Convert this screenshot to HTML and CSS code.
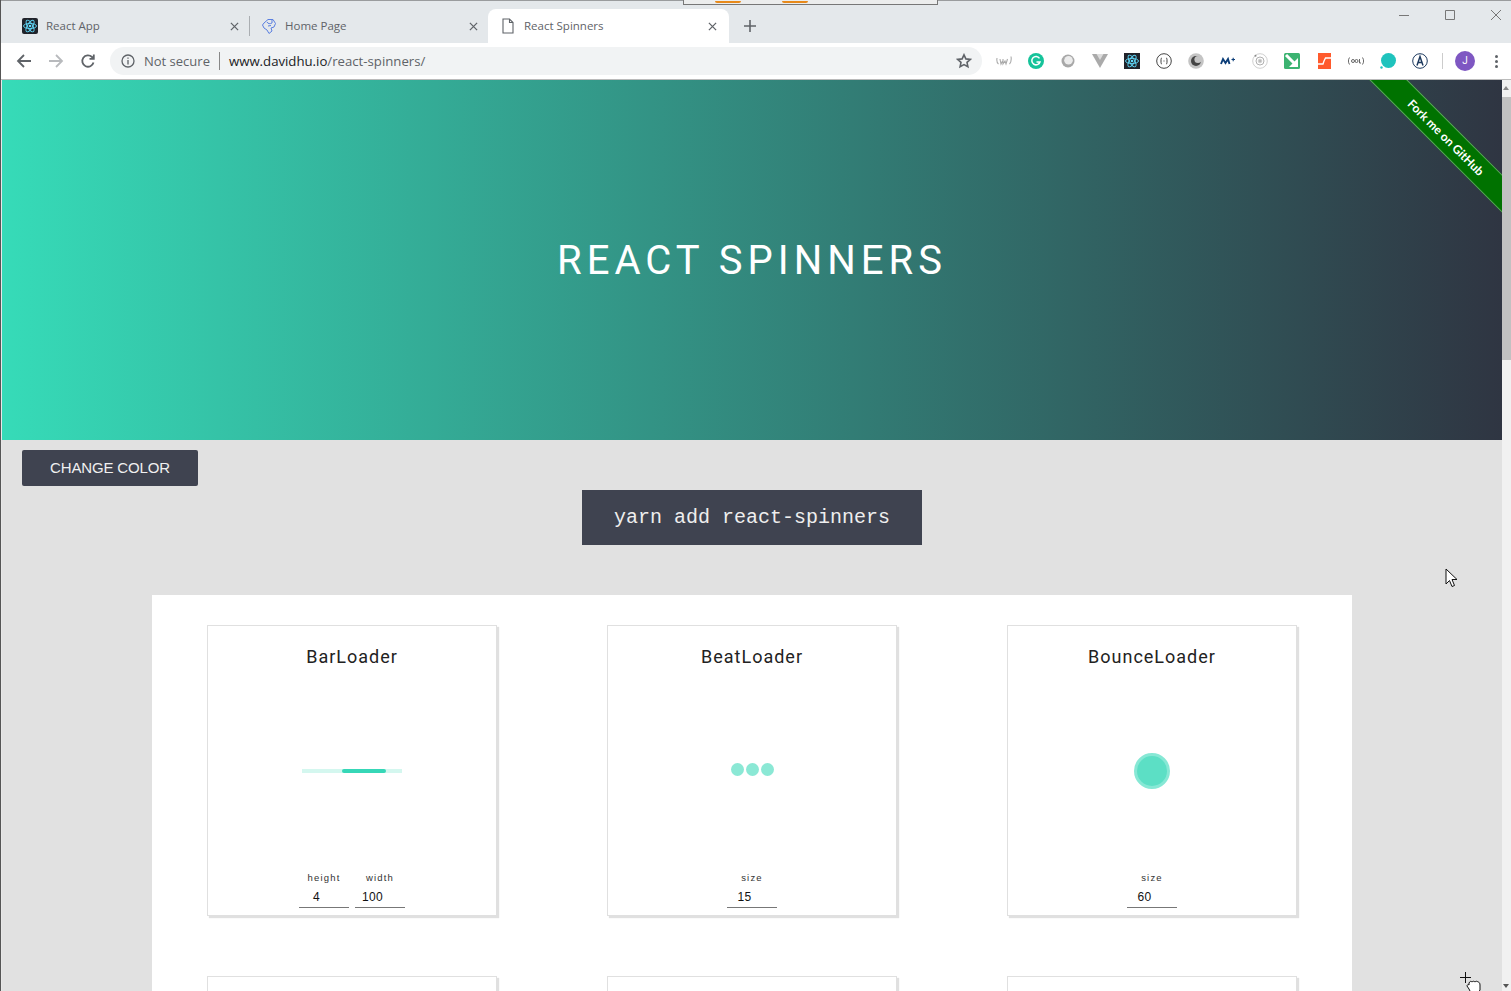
FILE: index.html
```html
<!DOCTYPE html>
<html lang="en">
<head>
    <meta charset="UTF-8">
    <meta name="viewport" content="width=device-width, initial-scale=1.0">
    <title>React Spinners</title>
    <link rel="stylesheet" href="styles.css">
</head>
<body>
<div class="browser">
    <div class="sliver"><span class="sliver-dot"></span><span class="sliver-dot"></span></div>

    <div class="tabstrip">
        <div class="tab">
            <svg class="tab-icon" viewBox="0 0 16 16"><rect width="16" height="16" rx="2" fill="#20232a"/><g fill="none" stroke="#61dafb" stroke-width=".9"><ellipse cx="8" cy="8" rx="6.5" ry="2.6"/><ellipse cx="8" cy="8" rx="6.5" ry="2.6" transform="rotate(60 8 8)"/><ellipse cx="8" cy="8" rx="6.5" ry="2.6" transform="rotate(120 8 8)"/></g><circle cx="8" cy="8" r="1.3" fill="#61dafb"/></svg>
            <span class="tab-title">React App</span>
            <svg class="tab-close" viewBox="0 0 10 10"><path d="M1 1l8 8M9 1l-8 8"/></svg>
        </div>
        <div class="tab-sep"></div>
        <div class="tab tab-home">
            <svg class="tab-icon" viewBox="0 0 16 16" fill="none" stroke="#5a7fe0" stroke-width="1"><path d="M3 5L7 1.500h5L14.500 5.500 13 9l-3 1 1 3-3 2.500L6 12l-3-2-1.500-3z"/><path d="M6 4c1 2 3 2 5 1M7 8l3-.5M11 2v3"/></svg>
            <span class="tab-title">Home Page</span>
            <svg class="tab-close" viewBox="0 0 10 10"><path d="M1 1l8 8M9 1l-8 8"/></svg>
        </div>
        <div class="tab tab-active">
            <svg class="tab-icon" viewBox="0 0 16 16" fill="none" stroke="#5f6368" stroke-width="1.1"><path d="M3 1h6.500L13 4.500V15H3zM9.500 1v3.500H13"/></svg>
            <span class="tab-title">React Spinners</span>
            <svg class="tab-close" viewBox="0 0 10 10"><path d="M1 1l8 8M9 1l-8 8"/></svg>
        </div>
        <svg class="new-tab" viewBox="0 0 12 12"><path d="M6 0v12M0 6h12"/></svg>
        <div class="window-btns">
            <svg viewBox="0 0 12 12"><path d="M1 6.500h10"/></svg>
            <svg viewBox="0 0 12 12"><path d="M1.500 1.500h9v9h-9z"/></svg>
            <svg viewBox="0 0 12 12"><path d="M1 1l10 10M11 1L1 11"/></svg>
        </div>
    </div>

    <div class="toolbar">
        <svg class="nav-btn" viewBox="0 0 16 16"><path d="M15 8H2M8 2L2 8l6 6"/></svg>
        <svg class="nav-btn nav-off" viewBox="0 0 16 16"><path d="M1 8h13M8 2l6 6-6 6"/></svg>
        <svg class="nav-btn" viewBox="0 0 16 16"><path d="M13.500 9.500A5.700 5.700 0 1 1 12 4l1.500 1.500M13.800 1.500v4.300H9.500"/></svg>
        <div class="omnibox">
            <svg class="info-icon" viewBox="0 0 14 14"><circle cx="7" cy="7" r="6"/><path d="M7 6v4.500M7 3.500v1.300"/></svg>
            <span class="not-secure">Not secure</span>
            <span class="omni-sep"></span>
            <span class="url">www.davidhu.io<span class="url-path">/react-spinners/</span></span>
            <svg class="star" viewBox="0 0 16 16"><path d="M8 1.800l1.900 4.100 4.400.5-3.300 3 .9 4.400L8 11.600l-3.900 2.200.9-4.400-3.300-3 4.400-.5z"/></svg>
        </div>
        <div class="extensions">
            <svg class="ext" viewBox="0 0 16 16" fill="none" stroke="#aaa" stroke-width="1.100"><path d="M1 5c-.5 3 0 5 1.500 6M15 3.500c.5 3 0 6-1.500 7.500M4 6l1 5 1.500-3M7 6v5l2-3 1 3 1.500-5"/></svg>
            <svg class="ext" viewBox="0 0 16 16"><circle cx="8" cy="8" r="8" fill="#15c39a"/><path d="M11.500 5.300A4.200 4.200 0 1 0 12 9H8.500" fill="none" stroke="#fff" stroke-width="1.500"/></svg>
            <svg class="ext" viewBox="0 0 16 16"><circle cx="8" cy="8" r="6.500" fill="#a8a8a8"/><circle cx="8.500" cy="7.300" r="4.300" fill="#ececec"/></svg>
            <svg class="ext" viewBox="0 0 16 16"><path d="M0 1h16L8 15z" fill="#aaa"/><path d="M4.500 1h7L8 7z" fill="#ddd"/></svg>
            <svg class="ext" viewBox="0 0 16 16"><rect width="16" height="16" fill="#20232a"/><g fill="none" stroke="#61dafb" stroke-width=".9"><ellipse cx="8" cy="8" rx="6.500" ry="2.600"/><ellipse cx="8" cy="8" rx="6.500" ry="2.600" transform="rotate(60 8 8)"/><ellipse cx="8" cy="8" rx="6.500" ry="2.600" transform="rotate(120 8 8)"/></g><circle cx="8" cy="8" r="1.300" fill="#61dafb"/></svg>
            <svg class="ext" viewBox="0 0 16 16" fill="none" stroke="#444" stroke-width="1"><circle cx="8" cy="8" r="7.300"/><path d="M6 5c-1 0-1 1-1 3s0 3 1 3M10 5c1 0 1 1 1 3s0 3-1 3M7.500 8h1"/></svg>
            <svg class="ext" viewBox="0 0 16 16"><circle cx="8" cy="8" r="7.800" fill="#c4c4c4"/><circle cx="8" cy="8" r="5" fill="#444"/><circle cx="10" cy="6.500" r="3.600" fill="#c4c4c4"/></svg>
            <svg class="ext" viewBox="0 0 16 16" fill="none" stroke="#0b3d78"><path d="M1 11L3 6l2.500 4L8 6l1.500 5" stroke-width="1.900"/><path d="M11.500 6.500h3.500M13.200 4.800v3.400" stroke-width="1.100"/></svg>
            <svg class="ext" viewBox="0 0 16 16" fill="none" stroke="#d0d0d0" stroke-width="1"><circle cx="8" cy="8" r="7.300"/><circle cx="8" cy="8" r="4" stroke="#b0b0b0"/><circle cx="8" cy="8" r="1.800" fill="#bbb"/><circle cx="3.500" cy="2.800" r="1" fill="#888" stroke="none"/></svg>
            <svg class="ext" viewBox="0 0 16 16"><rect width="16" height="16" rx="1.500" fill="#3cb371"/><path d="M2 2l9 9" fill="none" stroke="#fff" stroke-width="3"/><path d="M14 5v9H5z" fill="#fff"/></svg>
            <svg class="ext" viewBox="0 0 16 16"><rect x="2" width="13" height="16" fill="#ff5a2c"/><path d="M15 5H9.500L8 8M2 11h5l1-3" fill="none" stroke="#fff" stroke-width="1.300"/></svg>
            <svg class="ext" viewBox="0 0 16 16" fill="none" stroke="#666" stroke-width="1"><path d="M1.500 4.500C0 7 0 9 1.500 11.500M14.500 4.500c1.500 2.500 1.500 4.500 0 7"/><circle cx="5" cy="8" r="1.500"/><circle cx="8.500" cy="8" r="1.500"/><path d="M11.500 6v4h1.500"/></svg>
            <svg class="ext" viewBox="0 0 16 16"><circle cx="8.500" cy="7.500" r="7.500" fill="#1fc3bd"/><circle cx="1.500" cy="14.500" r="1.200" fill="#1fc3bd"/></svg>
            <svg class="ext" viewBox="0 0 16 16" fill="none" stroke="#1d3a5f" stroke-width="1"><circle cx="8" cy="8" r="7.300"/><path d="M5 12.500l3-9 3 9M6 9.500h4" stroke-width="1.500"/></svg>
            <span class="ext-sep"></span>
            <span class="avatar">J</span>
            <span class="kebab"><i></i><i></i><i></i></span>
        </div>
    </div>

    <div class="viewport">
        <div class="page">
            <header class="hero">
                <h1 class="hero-title">REACT SPINNERS</h1>
                <a class="ribbon">Fork me on GitHub</a>
            </header>

            <div class="controls">
                <button class="change-btn">CHANGE COLOR</button>
            </div>
            <div class="install"><code class="install-cmd">yarn add react-spinners</code></div>

            <main class="panel">
                <section class="card">
                    <h2 class="card-title">BarLoader</h2>
                    <div class="card-demo">
                        <div class="bar-track"><div class="bar-fill"></div></div>
                    </div>
                    <div class="fields">
                        <label class="field"><span class="field-label">height</span><span class="field-value">4</span></label>
                        <label class="field"><span class="field-label">width</span><span class="field-value">100</span></label>
                    </div>
                </section>
                <section class="card">
                    <h2 class="card-title">BeatLoader</h2>
                    <div class="card-demo">
                        <div class="beat"><i></i><i></i><i></i></div>
                    </div>
                    <div class="fields">
                        <label class="field"><span class="field-label">size</span><span class="field-value">15</span></label>
                    </div>
                </section>
                <section class="card">
                    <h2 class="card-title">BounceLoader</h2>
                    <div class="card-demo">
                        <div class="bounce"></div>
                    </div>
                    <div class="fields">
                        <label class="field"><span class="field-label">size</span><span class="field-value">60</span></label>
                    </div>
                </section>
                <section class="card"></section>
                <section class="card"></section>
                <section class="card"></section>
            </main>
        </div>
        <div class="scrollbar">
            <span class="scroll-up"></span>
            <span class="scroll-thumb"></span>
            <span class="scroll-down"></span>
        </div>

        <svg class="cursor cursor-arrow" viewBox="0 0 13 20"><path d="M1 1v15l3.500-3.500 2.500 6 2.500-1-2.500-6H12z" fill="#fff" stroke="#111" stroke-width="1"/></svg>
        <svg class="cursor cursor-grab" viewBox="0 0 22 22"><path d="M5.500 0v11M0 5.500h11" stroke="#111" fill="none"/><path d="M9 11c1-2 2-2 3-1 1-1 2-1 3 0 1-1 2-1 3 0 1 0 2 1 2 3v5l-2 3h-7l-2-4-2-3c0-1 1-2 2-1z" fill="#fff" stroke="#111"/></svg>
    </div>
</div>
</body>
</html>
```

FILE: styles.css
```css
* {
    box-sizing: border-box;
}

html, body {
    margin: 0;
    height: 100%;
    overflow: hidden;
}

body {
    font-family: "Roboto", sans-serif;
    background: #e1e1e1;
}

.browser {
    position: relative;
    display: flex;
    flex-direction: column;
    height: 991px;
    overflow: hidden;
    border-left: 1px solid #555;
}

/* bit of another window peeking over the top of the tabs */
.sliver {
    position: absolute;
    top: 0;
    left: 682px;
    width: 255px;
    height: 5px;
    display: flex;
    gap: 41px;
    padding-left: 31px;
    background: #eceded;
    border: 1px solid #777;
    border-top: 0;
}

.sliver-dot {
    width: 26px;
    height: 2px;
    margin-top: 1px;
    background: #e88a1a;
    border-radius: 0 0 8px 8px;
}

/* tab strip */
.tabstrip {
    display: flex;
    align-items: flex-end;
    height: 43px;
    flex-shrink: 0;
    padding-left: 7px;
    background: #e4e8eb;
    border-top: 1px solid #9a9c9e;
}

.tab {
    display: flex;
    align-items: center;
    width: 241px;
    height: 34px;
    padding: 0 10px 0 14px;
    font-family: "Open Sans", sans-serif;
    font-size: 11.5px;
    color: #5f6368;
}

.tab-home {
    width: 238px;
    padding-left: 11px;
}

.tab-active {
    padding: 0 12px 0 12px;
    background: #fff;
    border-radius: 8px 8px 0 0;
}

.tab-sep {
    width: 1px;
    height: 20px;
    margin-bottom: 7px;
    background: #aaaeb2;
    flex-shrink: 0;
}

.tab-icon {
    width: 16px;
    height: 16px;
    margin-right: 8px;
    flex-shrink: 0;
}

.tab-title {
    flex: 1;
    padding-bottom: 2px;
    white-space: nowrap;
}

.tab-close {
    width: 9px;
    height: 9px;
    flex-shrink: 0;
    fill: none;
    stroke: #5f6368;
    stroke-width: 1.4;
}

.new-tab {
    width: 12px;
    height: 12px;
    margin: 0 0 11px 15px;
    fill: none;
    stroke: #5f6368;
    stroke-width: 1.6;
}

.window-btns {
    display: flex;
    gap: 34px;
    margin-left: auto;
    align-self: flex-start;
    padding: 8px 9px 0 0;
}

.window-btns svg {
    width: 12px;
    height: 12px;
    fill: none;
    stroke: #777;
    stroke-width: 1;
}

/* toolbar */
.toolbar {
    display: flex;
    align-items: center;
    height: 37px;
    flex-shrink: 0;
    padding: 0 0 0 15px;
    background: #fff;
    border-bottom: 1px solid #bbb;
}

.nav-btn {
    width: 16px;
    height: 16px;
    margin-right: 16px;
    fill: none;
    stroke: #5f6368;
    stroke-width: 1.8;
}

.nav-off {
    stroke: #b8babd;
}

.omnibox {
    display: flex;
    align-items: center;
    width: 872px;
    height: 28px;
    margin-left: -2px;
    padding: 0 10px 0 11px;
    background: #f1f3f4;
    border-radius: 14px;
    font-family: "Open Sans", sans-serif;
    font-size: 13px;
}

.info-icon {
    width: 14px;
    height: 14px;
    margin-right: 9px;
    fill: none;
    stroke: #5f6368;
    stroke-width: 1.3;
}

.not-secure {
    color: #5f6368;
}

.omni-sep {
    width: 1px;
    height: 18px;
    margin: 0 9px;
    background: #888;
}

.url {
    color: #202124;
    font-size: 13.2px;
}

.url-path {
    color: #5f6368;
}

.star {
    width: 16px;
    height: 16px;
    margin-left: auto;
    fill: none;
    stroke: #5f6368;
    stroke-width: 1.6;
}

.extensions {
    display: flex;
    align-items: center;
    gap: 16px;
    margin-left: 14px;
}

.ext {
    width: 16px;
    height: 16px;
    flex-shrink: 0;
}

.ext-sep {
    width: 1px;
    height: 16px;
    margin: 0 -4px 0 -2px;
    background: #ccc;
}

.avatar {
    width: 20px;
    height: 20px;
    border-radius: 50%;
    background: #7e57c2;
    color: #fff;
    font-size: 10px;
    line-height: 20px;
    text-align: center;
}

.kebab {
    display: flex;
    flex-direction: column;
    gap: 2px;
    margin-left: 4px;
}

.kebab i {
    width: 3px;
    height: 3px;
    border-radius: 50%;
    background: #5f6368;
}

/* page */
.viewport {
    position: relative;
    display: flex;
    flex: 1;
    min-height: 0;
    padding-left: 1px;
    background: #e8e8e8;
}

.page {
    flex: 1;
    min-width: 0;
    overflow: hidden;
    background: #e1e1e1;
}

.hero {
    position: relative;
    display: flex;
    align-items: center;
    justify-content: center;
    height: 360px;
    overflow: hidden;
    background: linear-gradient(to right, #36dbb8, #2f3542);
}

.hero-title {
    margin: 0;
    color: #fff;
    font-size: 40px;
    font-weight: 400;
    letter-spacing: 5px;
}

.ribbon {
    position: absolute;
    top: 44px;
    right: -64px;
    width: 240px;
    padding: 1px 0;
    background: #007200;
    border-top: 1px solid #5fa85f;
    border-bottom: 1px solid #5fa85f;
    color: #fff;
    font-family: "Lato", sans-serif;
    font-size: 12px;
    font-weight: 700;
    line-height: 23px;
    text-align: center;
    transform: rotate(45deg);
}

.controls {
    padding: 10px 20px 4px;
}

.change-btn {
    display: block;
    width: 176px;
    height: 36px;
    padding: 0 0 1px;
    border: 0;
    border-radius: 2px;
    background: #3f4350;
    color: #f0f0f0;
    font-family: "Liberation Sans", sans-serif;
    font-size: 15px;
    letter-spacing: -.15px;
}

.install {
    display: flex;
    justify-content: center;
}

.install-cmd {
    width: 340px;
    height: 55px;
    background: #3f4350;
    color: #eee;
    font-family: "Liberation Mono", monospace;
    font-size: 20px;
    line-height: 55px;
    text-align: center;
}

.panel {
    display: grid;
    grid-template-columns: repeat(3, 290px);
    column-gap: 110px;
    row-gap: 60px;
    width: 1200px;
    margin: 50px auto 0;
    padding: 30px 55px;
    background: #fff;
}

.card {
    display: flex;
    flex-direction: column;
    height: 291px;
    background: #fff;
    border: 1px solid #e0e0e0;
    box-shadow: 2px 2px 1px #e0e0e0;
}

.card-title {
    margin: 20px 0 2px;
    color: #222;
    font-size: 18px;
    font-weight: 400;
    line-height: 22px;
    letter-spacing: 1px;
    text-align: center;
}

.card-demo {
    flex: 1;
    display: flex;
    align-items: center;
    justify-content: center;
}

.bar-track {
    position: relative;
    width: 100px;
    height: 4px;
    background: #d4f7ef;
}

.bar-fill {
    position: absolute;
    left: 40px;
    top: 0;
    width: 44px;
    height: 4px;
    border-radius: 2px;
    background: #36d7b7;
}

.beat {
    display: flex;
    margin-bottom: 3px;
}

.beat i {
    width: 13px;
    height: 13px;
    margin: 0 1px;
    border-radius: 50%;
    background: #8be8d5;
}

.bounce {
    width: 36px;
    height: 36px;
    border-radius: 50%;
    background: #5cdfc5;
    border: 3px solid #87e8d5;
}

.fields {
    display: flex;
    justify-content: center;
    gap: 6px;
    padding-bottom: 7px;
}

.field {
    display: flex;
    flex-direction: column;
    align-items: center;
    width: 50px;
}

.field-label {
    color: #333;
    font-family: "Liberation Sans", sans-serif;
    font-size: 9.5px;
    line-height: 12px;
    letter-spacing: 1.2px;
}

.field-value {
    width: 100%;
    height: 21px;
    margin-top: 3px;
    padding-right: 15px;
    border-bottom: 1px solid #777;
    color: #111;
    font-family: "Liberation Sans", sans-serif;
    font-size: 12px;
    line-height: 20px;
    letter-spacing: .3px;
    text-align: center;
}

.scrollbar {
    position: relative;
    display: flex;
    flex-direction: column;
    width: 9px;
    flex-shrink: 0;
    background: #f1f1f1;
}

.scroll-up {
    width: 0;
    height: 0;
    margin: 6px 0 7px 1px;
    border: 3px solid transparent;
    border-bottom: 4px solid #888;
    border-top: 0;
}

.scroll-thumb {
    height: 263px;
    background: #c1c1c1;
}

.scroll-down {
    position: absolute;
    bottom: 3px;
    left: 1px;
    border: 3px solid transparent;
    border-top: 4px solid #555;
    border-bottom: 0;
}

.cursor {
    position: absolute;
}

.cursor-arrow {
    left: 1444px;
    top: 488px;
    width: 13px;
    height: 20px;
}

.cursor-grab {
    left: 1459px;
    top: 892px;
    width: 22px;
    height: 22px;
}
```
